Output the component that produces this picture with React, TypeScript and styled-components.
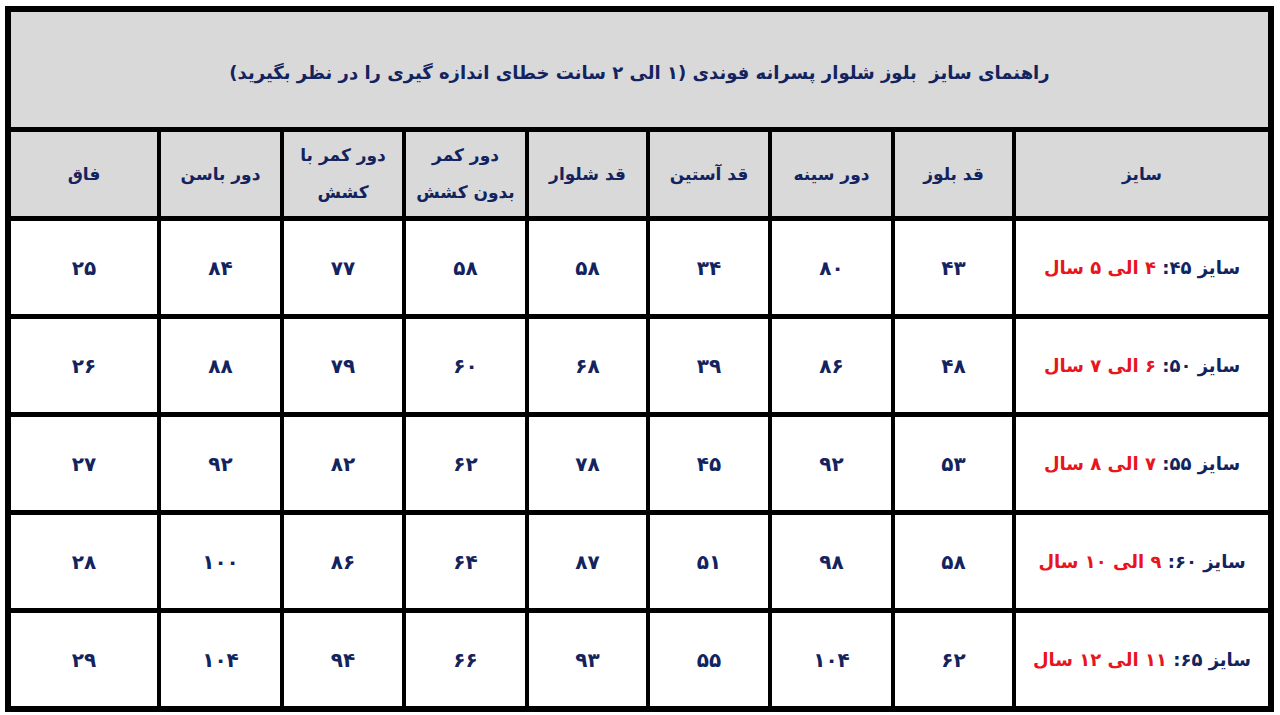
import styled, { createGlobalStyle } from "styled-components";

const GlobalStyle = createGlobalStyle`
  html, body {
    margin: 0;
    padding: 0;
    background: #ffffff;
  }
  body {
    font-family: "DejaVu Sans", "Noto Sans", sans-serif;
  }
`;

const Page = styled.div`
  padding: 6px 6px 0 5px;
`;

const Table = styled.div`
  direction: rtl;
  display: grid;
  grid-template-columns: 252px 117px 119px 118px 117px 119px 118px 119px 146px;
  grid-template-rows: 115px 84px repeat(5, 93px);
  gap: 5px 4px;
  width: 1269px;
  box-sizing: border-box;
  background: #000000;
  border: 6px solid #000000;
`;

const Title = styled.div`
  grid-column: 1 / -1;
  background: #d9d9d9;
  display: flex;
  align-items: center;
  justify-content: center;
  padding-top: 6px;
  color: #13235e;
  font-weight: bold;
  font-size: 18px;
`;

const Cell = styled.div<{ $head?: boolean; $big?: boolean }>`
  background: ${(p) => (p.$head ? "#d9d9d9" : "#ffffff")};
  display: flex;
  align-items: center;
  justify-content: center;
  text-align: center;
  color: #13235e;
  font-weight: bold;
  font-size: ${(p) => (p.$head ? "17px" : p.$big ? "20px" : "18px")};
  line-height: ${(p) => (p.$head ? "37px" : "normal")};
`;

const Age = styled.span`
  color: #e8161c;
`;

const headers: string[][] = [
  ["سایز"],
  ["قد بلوز"],
  ["دور سینه"],
  ["قد آستین"],
  ["قد شلوار"],
  ["دور کمر", "بدون کشش"],
  ["دور کمر با", "کشش"],
  ["دور باسن"],
  ["فاق"],
];

const rows = [
  { size: "۴۵", age: "۴ الی ۵ سال", values: ["۴۳", "۸۰", "۳۴", "۵۸", "۵۸", "۷۷", "۸۴", "۲۵"] },
  { size: "۵۰", age: "۶ الی ۷ سال", values: ["۴۸", "۸۶", "۳۹", "۶۸", "۶۰", "۷۹", "۸۸", "۲۶"] },
  { size: "۵۵", age: "۷ الی ۸ سال", values: ["۵۳", "۹۲", "۴۵", "۷۸", "۶۲", "۸۲", "۹۲", "۲۷"] },
  { size: "۶۰", age: "۹ الی ۱۰ سال", values: ["۵۸", "۹۸", "۵۱", "۸۷", "۶۴", "۸۶", "۱۰۰", "۲۸"] },
  { size: "۶۵", age: "۱۱ الی ۱۲ سال", values: ["۶۲", "۱۰۴", "۵۵", "۹۳", "۶۶", "۹۴", "۱۰۴", "۲۹"] },
];

function App() {
  return (
    <>
      <GlobalStyle />
      <Page>
        <Table>
          <Title>
            راهنمای سایز&nbsp; بلوز شلوار پسرانه فوندی (۱ الی ۲ سانت خطای اندازه گیری را در نظر بگیرید)
          </Title>
          {headers.map((lines, i) => (
            <Cell key={"h" + i} $head>
              <div>
                {lines.map((l, j) => (
                  <div key={j}>{l}</div>
                ))}
              </div>
            </Cell>
          ))}
          {rows.map((row) => [
            <Cell key={"s" + row.size}>
              <span>
                سایز {row.size}: <Age>{row.age}</Age>
              </span>
            </Cell>,
            ...row.values.map((v, i) => (
              <Cell key={row.size + "-" + i} $big>
                {v}
              </Cell>
            )),
          ])}
        </Table>
      </Page>
    </>
  );
}

export default App;
